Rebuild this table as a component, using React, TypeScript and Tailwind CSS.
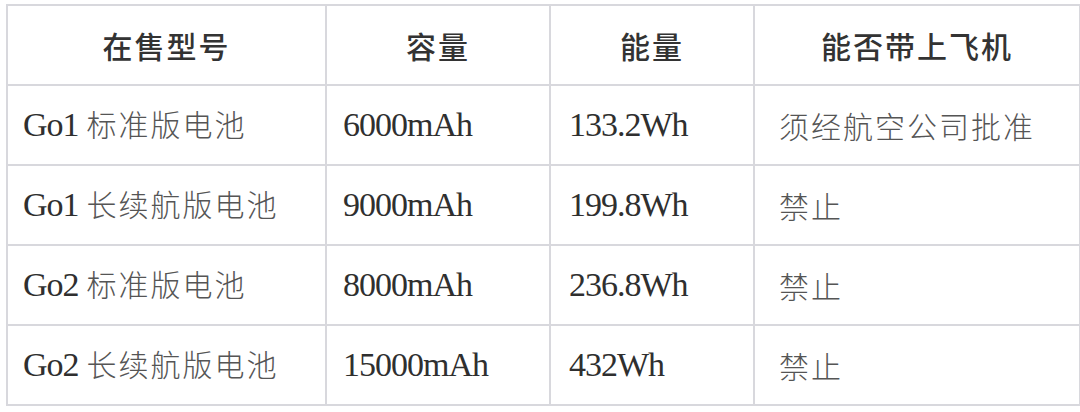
const headers = ['在售型号', '容量', '能量', '能否带上飞机']

const rows = [
  { model: 'Go1', name: '标准版电池', capacity: '6000mAh', energy: '133.2Wh', flight: '须经航空公司批准' },
  { model: 'Go1', name: '长续航版电池', capacity: '9000mAh', energy: '199.8Wh', flight: '禁止' },
  { model: 'Go2', name: '标准版电池', capacity: '8000mAh', energy: '236.8Wh', flight: '禁止' },
  { model: 'Go2', name: '长续航版电池', capacity: '15000mAh', energy: '432Wh', flight: '禁止' },
]

const cell = 'border-2 border-[#d8d8dd] h-[80px] p-0 align-middle'
const latin = 'font-["Liberation_Serif",serif] text-[34px] text-[#2f2f2f] tracking-[-1px]'

export default function App() {
  return (
    <div className="w-[1080px] h-[412px] bg-white pt-[4px] pl-[6px] overflow-hidden">
      <table className="border-collapse table-fixed w-[1073px] font-['Noto_Sans_CJK_SC',sans-serif] text-[30px] tracking-[2px] font-light text-[#555]">
        <colgroup>
          <col className="w-[319px]" />
          <col className="w-[224px]" />
          <col className="w-[204px]" />
          <col className="w-[326px]" />
        </colgroup>
        <thead>
          <tr>
            {headers.map((h) => (
              <th key={h} className={`${cell} text-center font-medium text-[#333] leading-none`}>
                {h}
              </th>
            ))}
          </tr>
        </thead>
        <tbody>
          {rows.map((r, i) => (
            <tr key={i}>
              <td className={`${cell} pl-[15px] leading-none`}>
                <span className={latin}>{r.model}</span>
                <span className="ml-[8px]">{r.name}</span>
              </td>
              <td className={`${cell} pl-[16px] leading-none`}>
                <span className={latin}>{r.capacity}</span>
              </td>
              <td className={`${cell} pl-[18px] leading-none`}>
                <span className={latin}>{r.energy}</span>
              </td>
              <td className={`${cell} pl-[24px] leading-none`}>{r.flight}</td>
            </tr>
          ))}
        </tbody>
      </table>
    </div>
  )
}
